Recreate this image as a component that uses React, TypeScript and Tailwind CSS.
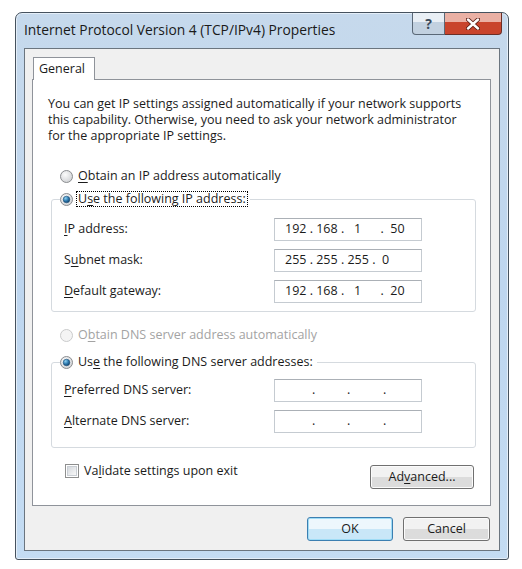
import type { ReactNode } from "react";

const font = { fontFamily: '"Open Sans", "Noto Sans", sans-serif' };

function Key({ children }: { children: ReactNode }) {
  return <span className="underline underline-offset-2 decoration-1">{children}</span>;
}

function Radio({ checked = false, disabled = false }: { checked?: boolean; disabled?: boolean }) {
  return (
    <svg width="13" height="13" viewBox="0 0 13 13" className="shrink-0">
      <defs>
        <radialGradient id="rg-bg" cx="40%" cy="35%" r="70%">
          <stop offset="0%" stopColor="#fbfbfb" />
          <stop offset="100%" stopColor="#cfd1d4" />
        </radialGradient>
        <radialGradient id="rg-dot" cx="35%" cy="30%" r="75%">
          <stop offset="0%" stopColor="#8fd2f2" />
          <stop offset="55%" stopColor="#2f7bb0" />
          <stop offset="100%" stopColor="#0f3f67" />
        </radialGradient>
      </defs>
      <circle cx="6.5" cy="6.5" r="6" fill={disabled ? "#f4f4f4" : "url(#rg-bg)"} stroke={disabled ? "#c9cacb" : "#8b8d90"} />
      {checked ? <circle cx="6.5" cy="6.5" r="3.3" fill="url(#rg-dot)" stroke="#1d4f78" strokeWidth="0.6" /> : null}
    </svg>
  );
}

function RadioRow({ checked, disabled, focused, children }: { checked?: boolean; disabled?: boolean; focused?: boolean; children: ReactNode }) {
  return (
    <div className="flex h-[16px] items-center gap-[3px]">
      <Radio checked={checked} disabled={disabled} />
      <span className={`whitespace-nowrap px-[1px] leading-[14px] ${focused ? "border border-dotted border-black" : "border border-transparent"} ${disabled ? "text-[#a3a3a3]" : "text-[#1b1b1b]"}`}>
        {children}
      </span>
    </div>
  );
}

function IpBox({ value }: { value?: string }) {
  return (
    <div className="flex h-[23px] w-[148px] items-center border border-[#c5cbd1] border-t-[#abb0b6] bg-white text-[#1b1b1b]">
      {value ? (
        <span className="whitespace-pre pl-[10px]">{value}</span>
      ) : (
        <div className="flex pl-[37px]">
          <span className="w-[35px]">.</span>
          <span className="w-[36px]">.</span>
          <span>.</span>
        </div>
      )}
    </div>
  );
}

function Field({ label, value }: { label: ReactNode; value?: string }) {
  return (
    <div className="flex items-center">
      <span className="flex-1 whitespace-nowrap text-[#1b1b1b]">{label}</span>
      <IpBox value={value} />
    </div>
  );
}

function Button({ children, primary = false, className = "" }: { children: ReactNode; primary?: boolean; className?: string }) {
  return (
    <button
      type="button"
      className={`h-[24px] rounded-[3px] border text-[#1b1b1b] ${
        primary
          ? "border-[#3c7fb1] bg-gradient-to-b from-[#edf7fd] from-50% to-[#c9e7f8] to-50% shadow-[inset_0_0_0_1px_#9fdcf6]"
          : "border-[#707070] bg-gradient-to-b from-[#f2f2f2] from-50% to-[#dcdcdc] to-50% shadow-[inset_0_0_0_1px_#fbfbfb]"
      } ${className}`}
    >
      {children}
    </button>
  );
}

export default function App() {
  return (
    <div className="h-[569px] w-[522px] bg-white pl-[15px] pt-[12px] text-[12.5px]" style={font}>
      <div className="flex h-[548px] w-[494px] flex-col rounded-b-[3px] rounded-t-[7px] border border-[#46525e] bg-gradient-to-b from-[#c6d9ec] via-[#bed6ef] to-[#c4dcf3] px-[8px] shadow-[inset_0_0_0_1px_#e4eef8]">
        {/* title bar */}
        <div className="flex h-[35px] items-start justify-between">
          <div className="flex h-full items-center text-[13.8px] text-[#1a1a1a]">Internet Protocol Version 4 (TCP/IPv4) Properties</div>
          <div className="-mr-[2px] flex h-[22px]">
            <div className="flex w-[33px] items-center justify-center rounded-bl-[4px] border border-t-0 border-[#5a6877] bg-gradient-to-b from-[#e9eff5] from-45% to-[#c2d1e0] to-45% text-[14px] font-bold text-[#3a4a5a]">
              ?
            </div>
            <div className="flex w-[57px] items-center justify-center rounded-br-[4px] border border-l-0 border-t-0 border-[#6b2e26] bg-gradient-to-b from-[#eab0a4] from-45% to-[#c9442c] to-45%">
              <svg width="14" height="12" viewBox="0 0 14 12">
                <path d="M2 1.5 L12 10.5 M12 1.5 L2 10.5" stroke="#5b1d14" strokeWidth="4.2" strokeLinecap="round" />
                <path d="M2 1.5 L12 10.5 M12 1.5 L2 10.5" stroke="#ffffff" strokeWidth="2.4" strokeLinecap="round" />
              </svg>
            </div>
          </div>
        </div>

        {/* client area */}
        <div className="flex h-[503px] w-[476px] flex-col border border-[#6b757f] bg-[#f0f0f0]">
          <div className="pl-[8px] pt-[8px]">
            <div className="relative z-10 -mb-px flex h-[23px] w-[62px] items-center border border-b-0 border-[#8f939a] bg-white pl-[5px] text-[#1b1b1b]">
              General
            </div>
          </div>
          <div className="ml-[7px] flex h-[427px] w-[459px] flex-col border border-[#8f939a] bg-white">
            <p className="whitespace-nowrap pl-[15px] pt-[16px] leading-[16px] text-[#1b1b1b]">
              You can get IP settings assigned automatically if your network supports
              <br />
              this capability. Otherwise, you need to ask your network administrator
              <br />
              for the appropriate IP settings.
            </p>

            <div className="ml-[27px] mt-[24px]">
              <RadioRow>
                <Key>O</Key>btain an IP address automatically
              </RadioRow>
            </div>

            <fieldset className="ml-[18px] mt-[7px] w-[425px] rounded-[3px] border border-[#d5dadf] pb-[8px] pl-[12px] pr-[53px]">
              <legend className="-ml-[4px] pr-[2px]">
                <RadioRow checked focused>
                  U<Key>s</Key>e the following IP address:
                </RadioRow>
              </legend>
              <div className="mt-[11px] flex flex-col gap-[8px]">
                <Field label={<><Key>I</Key>P address:</>} value={"192 . 168 .   1      .  50"} />
                <Field label={<>S<Key>u</Key>bnet mask:</>} value={"255 . 255 . 255 .  0"} />
                <Field label={<><Key>D</Key>efault gateway:</>} value={"192 . 168 .   1      .  20"} />
              </div>
            </fieldset>

            <div className="ml-[27px] mt-[15px]">
              <RadioRow disabled>
                O<Key>b</Key>tain DNS server address automatically
              </RadioRow>
            </div>

            <fieldset className="ml-[18px] mt-[11px] w-[425px] rounded-[3px] border border-[#d5dadf] pb-[14px] pl-[12px] pr-[53px]">
              <legend className="-ml-[4px] pr-[2px]">
                <RadioRow checked>
                  Us<Key>e</Key> the following DNS server addresses:
                </RadioRow>
              </legend>
              <div className="mt-[9px] flex flex-col gap-[8px]">
                <Field label={<><Key>P</Key>referred DNS server:</>} />
                <Field label={<><Key>A</Key>lternate DNS server:</>} />
              </div>
            </fieldset>

            <div className="mt-[15px] flex items-start justify-between pl-[32px] pr-[16px]">
              <label className="flex h-[16px] items-center gap-[5px] text-[#1b1b1b]">
                <span className="flex h-[14px] w-[14px] shrink-0 items-center justify-center border border-[#8e8f8f] bg-white">
                  <span className="h-[10px] w-[10px] border border-[#c9ced4] bg-gradient-to-br from-[#d5d9de] to-[#f8f8f8]" />
                </span>
                <span className="whitespace-nowrap">
                  Va<Key>l</Key>idate settings upon exit
                </span>
              </label>
              <Button className="mt-[2px] w-[104px]">
                Ad<Key>v</Key>anced...
              </Button>
            </div>
          </div>

          <div className="mt-[11px] flex justify-end gap-[10px] pr-[9px]">
            <Button primary className="w-[86px]">OK</Button>
            <Button className="w-[87px]">Cancel</Button>
          </div>
        </div>
      </div>
    </div>
  );
}
